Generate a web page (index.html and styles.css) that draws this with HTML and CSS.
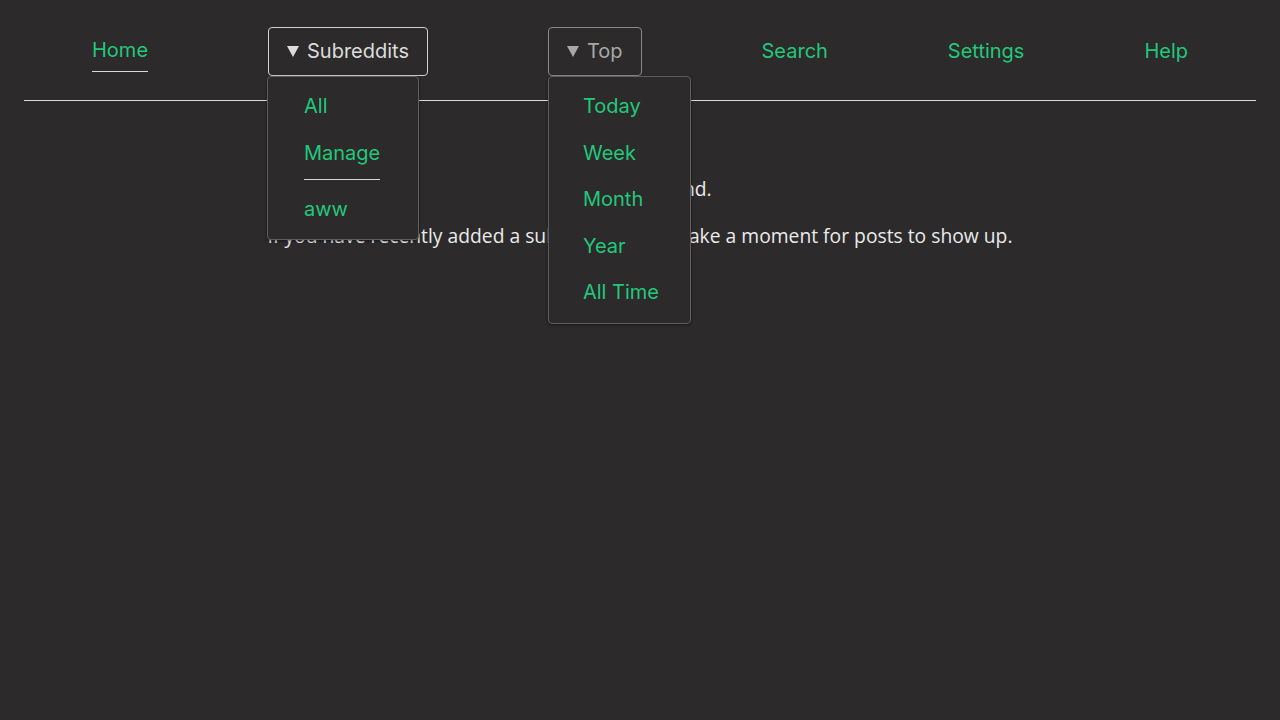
FILE: index.html
```html
<!DOCTYPE html>
<html>
<head>
<meta charset="utf-8">
<link rel="stylesheet" href="styles.css">
</head>
<body>
<div class="page">
  <nav class="nav">
    <a class="nav-link active">Home</a>
    <div class="menu">
      <button class="menu-btn open"><svg class="tri" width="12" height="11" viewBox="0 0 12 11"><polygon points="0,0 12,0 6,11" fill="currentColor"/></svg><span>Subreddits</span></button>
      <div class="dropdown dd-sub">
        <a class="dd-item">All</a>
        <a class="dd-item">Manage</a>
        <hr class="dd-sep">
        <a class="dd-item">aww</a>
      </div>
    </div>
    <div class="menu">
      <button class="menu-btn dim"><svg class="tri" width="12" height="11" viewBox="0 0 12 11"><polygon points="0,0 12,0 6,11" fill="currentColor"/></svg><span>Top</span></button>
      <div class="dropdown dd-top">
        <a class="dd-item">Today</a>
        <a class="dd-item">Week</a>
        <a class="dd-item">Month</a>
        <a class="dd-item">Year</a>
        <a class="dd-item">All Time</a>
      </div>
    </div>
    <a class="nav-link">Search</a>
    <a class="nav-link">Settings</a>
    <a class="nav-link">Help</a>
  </nav>
  <main class="main">
    <p class="msg">No posts found.</p>
    <p class="msg">If you have recently added a subreddit, it may take a moment for posts to show up.</p>
  </main>
</div>
</body>
</html>
```

FILE: styles.css
```css
html, body {
  margin: 0;
  padding: 0;
  background: #2c2a2b;
  height: 100%;
}
.page {
  padding: 0 24px;
}
.nav {
  display: flex;
  justify-content: space-between;
  align-items: center;
  padding: 27px 68px 24px 68px;
  border-bottom: 1px solid #dcdcdc;
  font-family: "Inter", "Noto Sans", sans-serif;
  font-size: 20px;
}
.nav-link {
  color: #22c87a;
  line-height: 26px;
  padding-bottom: 2px;
  cursor: pointer;
}
.nav-link.active {
  padding-bottom: 8px;
  border-bottom: 1px solid #d8d8d8;
  margin-top: 6px;
}
.menu {
  position: relative;
}
.menu-btn {
  display: flex;
  align-items: center;
  gap: 8px;
  height: 49px;
  padding: 0 18px 2px 18px;
  background: transparent;
  border: 1px solid #d0d0d0;
  border-radius: 4px;
  color: #dcdcdc;
  font-family: inherit;
  font-size: 20px;
}
.menu-btn.dim {
  border-color: #8a8a8a;
  color: #a8a8a8;
}
.tri {
  display: block;
  margin-top: 2px;
}
.dropdown {
  position: absolute;
  top: 49px;
  left: -1px;
  display: flex;
  flex-direction: column;
  padding: 16px 38px 17px 36px;
  background: #2c2a2b;
  border: 1px solid #5e5e5e;
  border-radius: 4px;
  box-shadow: 0 1px 3px rgba(0,0,0,0.5);
  z-index: 2;
}
.dd-top {
  left: 0;
  padding: 16px 31px 18px 34px;
}
.dd-item {
  color: #22c87a;
  line-height: 26px;
  white-space: nowrap;
}
.dd-item + .dd-item {
  margin-top: 20.5px;
}
.dd-sep {
  margin: 13px 0 16px 0;
  border: 0;
  border-top: 1px solid #d8d8d8;
}
.main {
  padding-top: 75px;
  text-align: center;
}
.msg {
  margin: 0 0 21px 0;
  font-family: "Open Sans", "Noto Sans", sans-serif;
  font-size: 19.3px;
  line-height: 26px;
  color: #eaeaea;
}
```
